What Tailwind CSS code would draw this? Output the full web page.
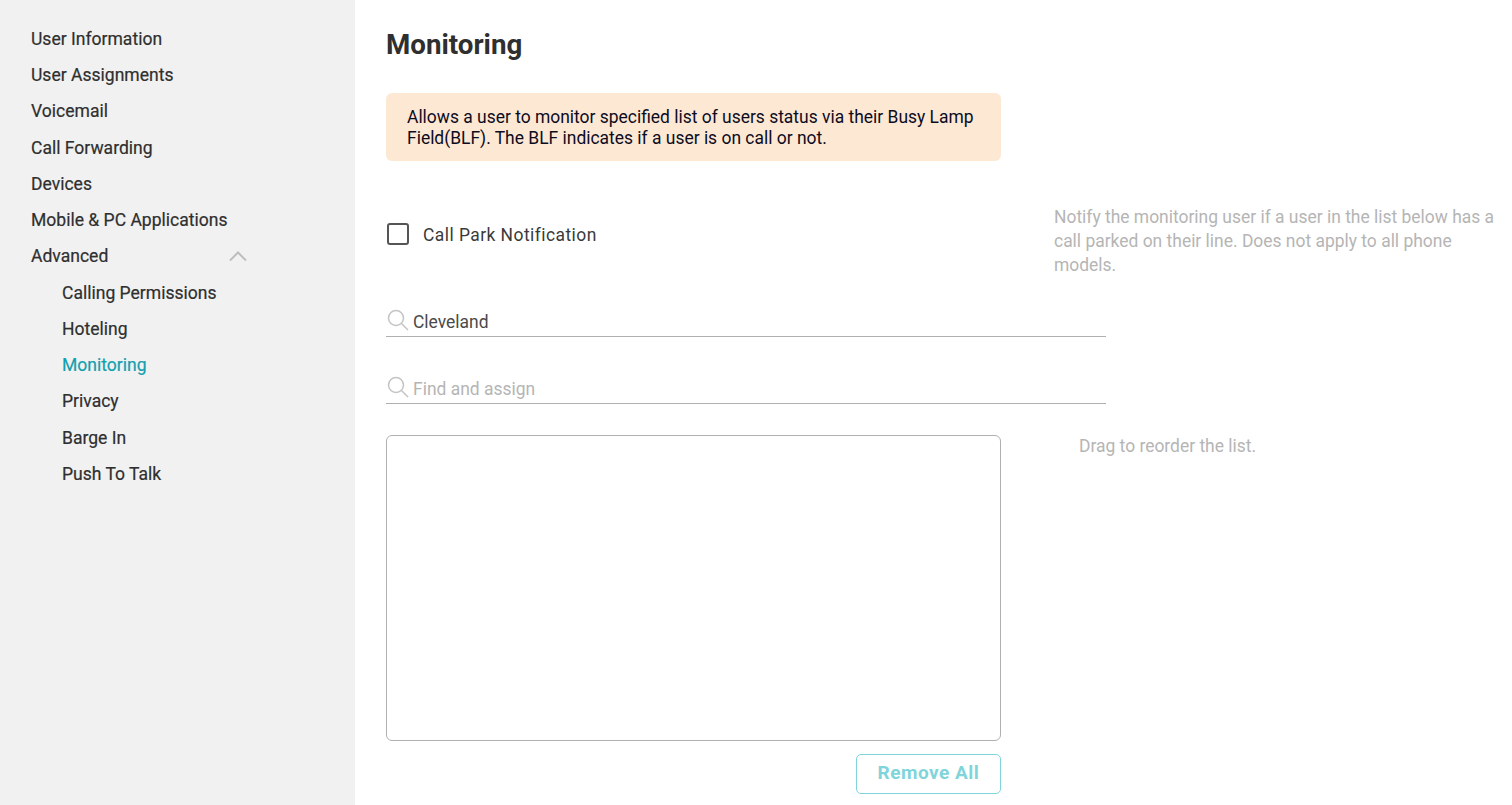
<!DOCTYPE html>
<html>
<head>
  <meta charset="utf-8">
  <title>Monitoring</title>
  <script src="https://cdn.jsdelivr.net/npm/@tailwindcss/browser@4"></script>
</head>
<body class="bg-white">
  <div class="flex h-[805px] overflow-hidden font-['Roboto',sans-serif] text-[#2f2f2f]">

    <aside class="w-[355px] shrink-0 bg-[#f1f1f1] pt-[20.85px] text-[17.55px] [-webkit-text-stroke:0.2px]">
      <div class="flex h-[36.25px] items-center pl-[31px]">User Information</div>
      <div class="flex h-[36.25px] items-center pl-[31px]">User Assignments</div>
      <div class="flex h-[36.25px] items-center pl-[31px]">Voicemail</div>
      <div class="flex h-[36.25px] items-center pl-[31px]">Call Forwarding</div>
      <div class="flex h-[36.25px] items-center pl-[31px]">Devices</div>
      <div class="flex h-[36.25px] items-center pl-[31px]">Mobile &amp; PC Applications</div>
      <div class="flex h-[36.25px] items-center justify-between pl-[31px] pr-[108px]">
        Advanced
        <svg width="18" height="10" viewBox="0 0 18 10" fill="none" stroke="#bdbdbd" stroke-width="2"><path d="M1 9.5 9 1.5l8 8"/></svg>
      </div>
      <div class="flex h-[36.25px] items-center pl-[62px]">Calling Permissions</div>
      <div class="flex h-[36.25px] items-center pl-[62px]">Hoteling</div>
      <div class="flex h-[36.25px] items-center pl-[62px] text-[#12a0ae]">Monitoring</div>
      <div class="flex h-[36.25px] items-center pl-[62px]">Privacy</div>
      <div class="flex h-[36.25px] items-center pl-[62px]">Barge In</div>
      <div class="flex h-[36.25px] items-center pl-[62px]">Push To Talk</div>
    </aside>

    <main class="flex-1 pl-[31px] text-[17.45px]">
      <h1 class="mt-[28px] h-[33px] text-[27.73px] leading-[33px] font-bold">Monitoring</h1>

      <div class="mt-[32px] h-[68px] w-[615px] rounded-[6px] bg-[#fde8d3] px-[21px] pt-[14px] leading-[21px] text-[#0c0c1e]">
        Allows a user to monitor specified list of users status via their Busy Lamp Field(BLF). The BLF indicates if a user is on call or not.
      </div>

      <div class="mt-[44px] flex h-[72px]">
        <label class="flex h-[58px] w-[668px] items-center">
          <span class="ml-[1px] h-[22px] w-[22px] rounded-[3px] border-2 border-[#555555]"></span>
          <span class="ml-[14px] pt-[2px] tracking-[0.45px] text-[#3a3a3a]">Call Park Notification</span>
        </label>
        <p class="w-[445px] leading-[24px] text-[#b5b5b5]">Notify the monitoring user if a user in the list below has a call parked on their line. Does not apply to all phone models.</p>
      </div>

      <div class="mt-[25px] flex h-[35px] w-[720px] items-center border-b border-[#b0b0b0] pt-[7px]">
        <svg class="ml-[1px] mt-[-5px]" width="22" height="22" viewBox="0 0 22 22" fill="none" stroke="#c4c4c4" stroke-width="1.5"><circle cx="9" cy="9" r="7.5"/><path d="M14.5 14.5 21 21"/></svg>
        <span class="ml-[4px] text-[#4a4a4a]">Cleveland</span>
      </div>

      <div class="mt-[32px] flex h-[35px] w-[720px] items-center border-b border-[#b0b0b0] pt-[7px]">
        <svg class="ml-[1px] mt-[-5px]" width="22" height="22" viewBox="0 0 22 22" fill="none" stroke="#c4c4c4" stroke-width="1.5"><circle cx="9" cy="9" r="7.5"/><path d="M14.5 14.5 21 21"/></svg>
        <span class="ml-[4px] text-[#b5b5b5]">Find and assign</span>
      </div>

      <div class="mt-[31px] flex">
        <div class="h-[306px] w-[615px] rounded-[6px] border border-[#b0b0b0]"></div>
        <p class="ml-[78px] mt-[-1px] leading-[24px] text-[#b5b5b5]">Drag to reorder the list.</p>
      </div>

      <div class="mt-[13px] flex w-[615px] justify-end">
        <button class="h-[40px] w-[145px] rounded-[5px] border border-[#7fd5da] pb-[2px] text-[19px] font-bold tracking-[0.5px] text-[#7fd5da]">Remove All</button>
      </div>
    </main>

  </div>
</body>
</html>
